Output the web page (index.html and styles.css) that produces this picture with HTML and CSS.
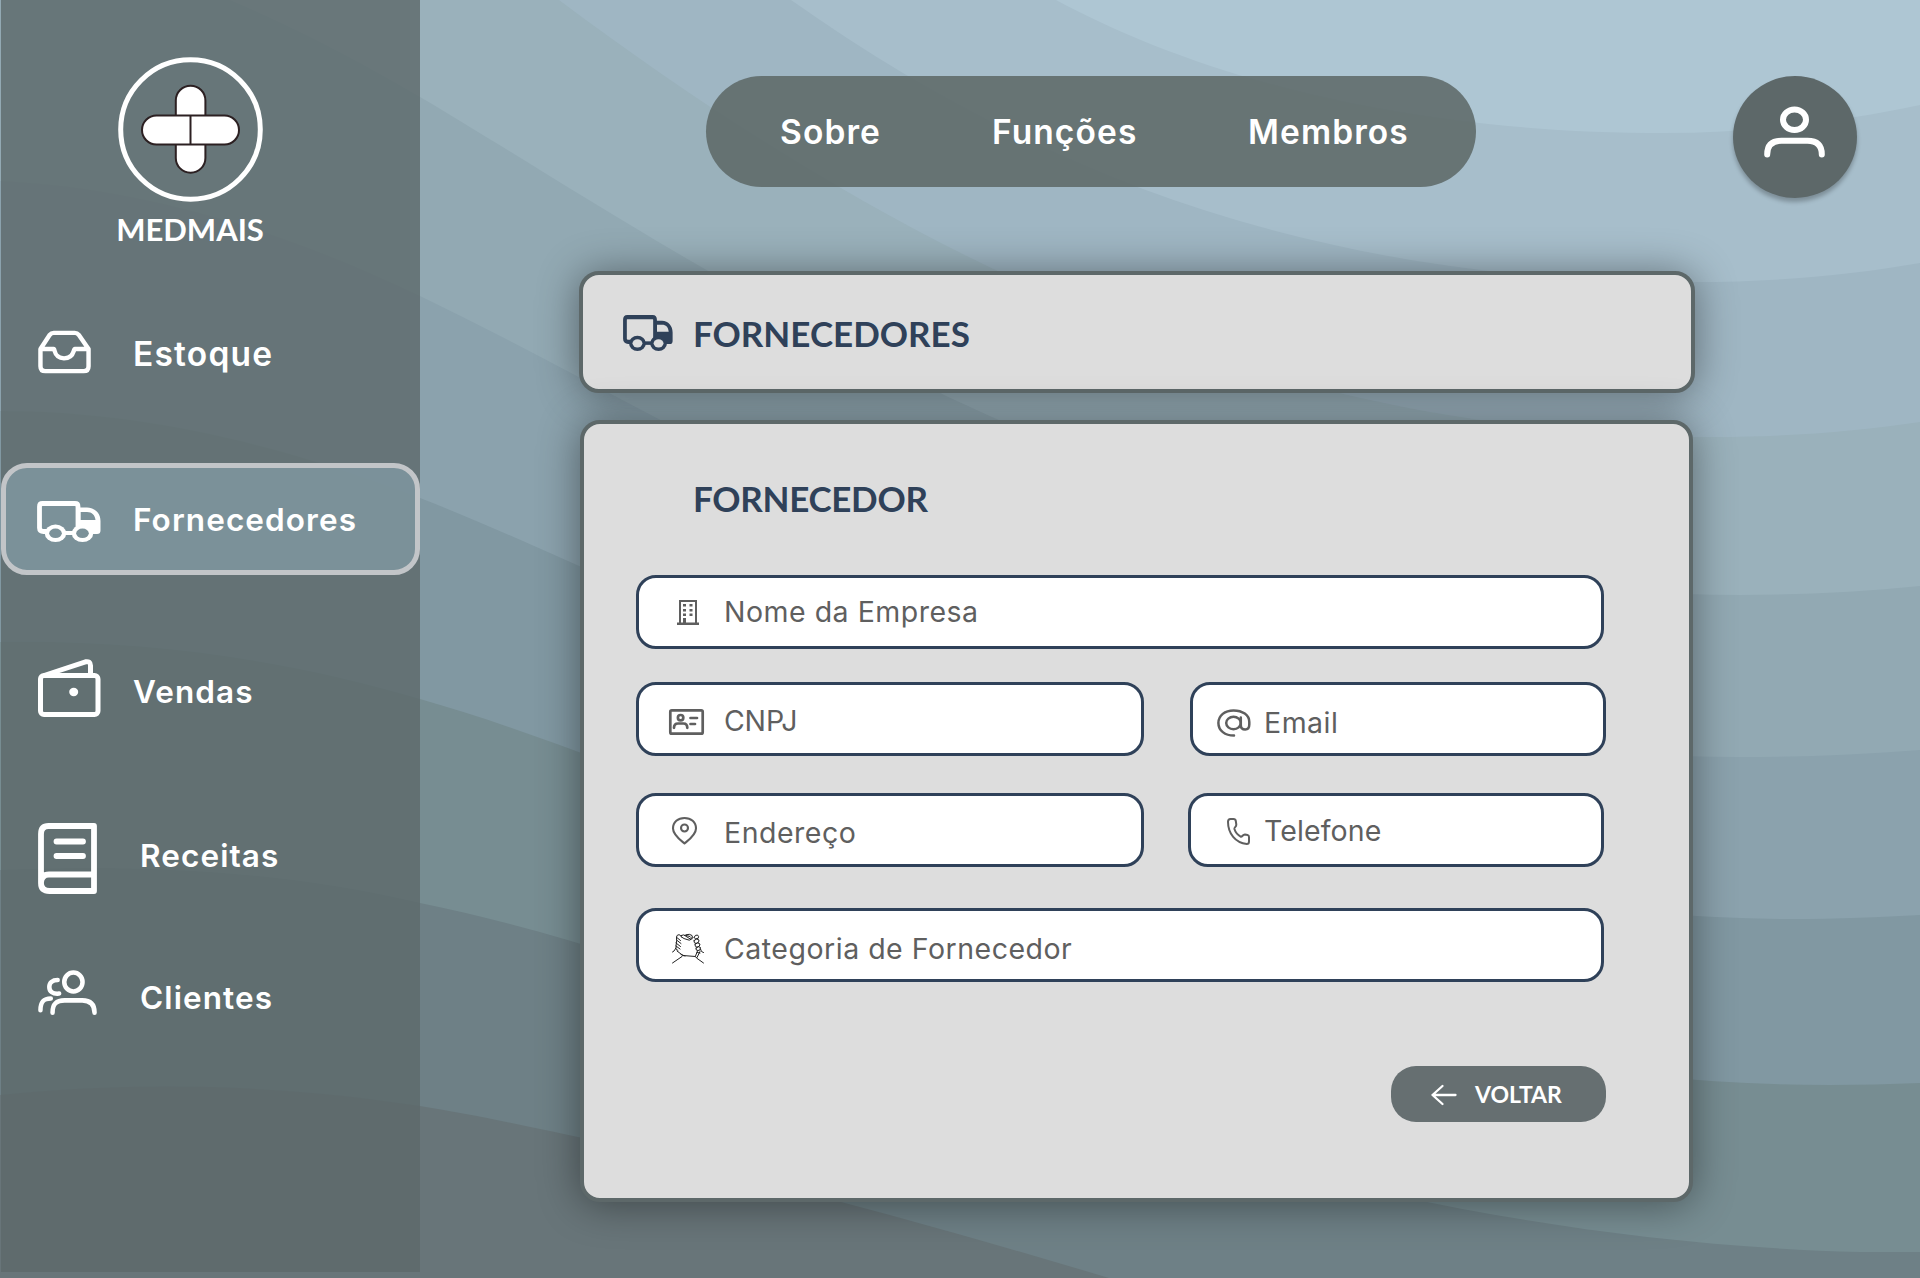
FILE: index.html
```html
<!DOCTYPE html>
<html lang="pt-BR">
<head>
<meta charset="utf-8">
<title>MedMais - Fornecedores</title>
<link rel="stylesheet" href="styles.css">
</head>
<body>
<svg class="waves" viewBox="0 0 1920 1278" preserveAspectRatio="none" aria-hidden="true">
  <rect width="1920" height="1278" fill="#aec6d3"/>
  <path fill="#a7becb" d="M1056 0C1190 72 1390 133 1665 133C1750 133 1840 122 1920 105V1278H0V0Z"/>
  <path fill="#9fb6c3" d="M791 0C1060 190 1340 282 1694 282C1780 282 1850 275 1920 263V1278H0V0Z"/>
  <path fill="#9ab1bb" d="M559 0C920 270 1280 437 1715 437C1790 437 1860 431 1920 422V1278H0V0Z"/>
  <path fill="#92a9b3" d="M230 0C300 30 360 62 420 97C640 225 1150 594 1740 595C1800 595 1860 592 1920 586V1278H0V0Z"/>
  <path fill="#8ba2ad" d="M0 181C150 188 290 234 420 296C740 450 1200 758 1740 757C1800 757 1860 755 1920 750V1278H0Z"/>
  <path fill="#8198a2" d="M0 411C150 411 290 448 420 498C720 615 1240 919 1790 919C1840 919 1880 917 1920 915V1278H0Z"/>
  <path fill="#778d92" d="M0 642C150 640 290 660 420 699C760 795 1250 1085 1830 1085C1860 1085 1890 1084 1920 1083V1278H0Z"/>
  <path fill="#6e8086" d="M0 870C150 864 290 872 420 903C800 980 1230 1235 1860 1252H1920V1278H0Z"/>
  <path fill="#687579" d="M0 1095C150 1080 290 1086 420 1106C580 1132 850 1200 1109 1278H0Z"/>
</svg>

<svg class="sprite" aria-hidden="true">
  <symbol id="truck" viewBox="0 0 64 41" preserveAspectRatio="none">
    <mask id="wheel-holes">
      <rect width="64" height="41" fill="#fff"/>
      <ellipse cx="18.500" cy="32.300" rx="6.300" ry="4.800" fill="#000"/>
      <ellipse cx="45.500" cy="32.300" rx="6.300" ry="4.800" fill="#000"/>
    </mask>
    <g mask="url(#wheel-holes)" fill="currentColor">
      <path d="M10 30.500H6.500Q2.500 30.500 2.500 27V5.500Q2.500 2.500 5.500 2.500H38Q41 2.500 41 5.500V29" fill="none" stroke="currentColor" stroke-width="4.800"/>
      <path fill-rule="evenodd" d="M41 6.500H50C58 7 63.500 12 63.500 20V29.500Q63.500 33 60 33H41ZM43.500 11V19H58.500C58 14 55 11 50 11Z"/>
      <rect x="26" y="30" width="12" height="4"/>
      <ellipse cx="18.500" cy="32.300" rx="10.800" ry="8.700"/>
      <ellipse cx="45.500" cy="32.300" rx="10.800" ry="8.700"/>
    </g>
  </symbol>
</svg>

<div class="app">
  <aside class="sidebar">
    <div class="brand">
      <svg class="brand-mark" viewBox="0 0 145 145">
        <circle cx="72.500" cy="72.500" r="69.800" fill="none" stroke="#fff" stroke-width="5"/>
        <g fill="#fff" stroke="#2c2022" stroke-width="2">
          <rect x="57.800" y="28.700" width="29.600" height="87" rx="14.800"/>
          <rect x="24" y="58.500" width="97" height="29" rx="14.500"/>
          <path d="M72.500 58.500V87.500"/>
        </g>
      </svg>
      <span class="brand-name">MEDMAIS</span>
    </div>
    <nav class="menu">
      <a class="menu-item">
        <svg class="ico-inbox" viewBox="0 0 54 44" fill="none" stroke="#fff" stroke-width="4.500" stroke-linejoin="round"><path d="M2.500 19L12 4.500Q13.500 2.500 16 2.500H37.500Q40 2.500 41.500 4.500L51.500 19V36.500Q51.500 41.500 46.500 41.500H7.500Q2.500 41.500 2.500 36.500V19H16C17.500 19 16 28 26.500 28.500C37 28.500 36 19 37.500 19H51"/></svg>
        <span class="t-estoque">Estoque</span>
      </a>
      <a class="menu-item active">
        <svg class="ico-truck"><use href="#truck"/></svg>
        <span class="t-fornecedores">Fornecedores</span>
      </a>
      <a class="menu-item sales">
        <svg class="ico-wallet" viewBox="0 0 63 58" fill="none" stroke="#fff" stroke-width="5" stroke-linejoin="round"><rect x="2.500" y="16.500" width="57.500" height="39" rx="3.500"/><path d="M6 16.500L47.500 2.800Q52.500 2 52.500 6.500V16"/><ellipse cx="35.700" cy="33" rx="4.500" ry="4.200" fill="#fff" stroke="none"/></svg>
        <span class="t-vendas">Vendas</span>
      </a>
      <a class="menu-item recipes">
        <svg class="ico-book" viewBox="0 0 59 71" fill="none" stroke="#fff" stroke-width="5.800" stroke-linejoin="round" stroke-linecap="round"><path d="M3 60V11Q3 3 10.500 3H56V68H11.500Q3 68 3 60Q3 51.500 11 51.500H56M18.500 18.500H45M18.500 33H45"/></svg>
        <span class="t-receitas">Receitas</span>
      </a>
      <a class="menu-item clients">
        <svg class="ico-users" viewBox="0 0 60 46" fill="none" stroke="#fff" stroke-width="4.600" stroke-linecap="round"><ellipse cx="36" cy="11.800" rx="9.300" ry="9.600"/><path d="M14.800 43C14.800 34 19 30.500 27 30.500H45C53 30.500 57.500 34 57.500 43M20 9.800C14.500 9.800 11.500 12.500 11.500 16.800C11.500 21.500 15 24.300 21.500 23.600M2.500 40.500C2.500 32 5.500 28.500 13 28.500"/></svg>
        <span class="t-clientes">Clientes</span>
      </a>
    </nav>
  </aside>

  <main class="content">
    <header class="topbar">
      <nav class="pill">
        <a class="t-sobre">Sobre</a>
        <a class="t-funcoes">Funções</a>
        <a class="t-membros">Membros</a>
      </nav>
      <a class="avatar">
        <svg viewBox="0 0 61 52" fill="none" stroke="#fff" stroke-width="6" stroke-linecap="round"><ellipse cx="30.500" cy="13.800" rx="11.500" ry="10.300"/><path d="M3.200 48.500C3.200 38.500 9 34.800 17.500 34.800H43.500C52 34.800 57.800 38.500 57.800 48.500"/></svg>
      </a>
    </header>

    <section class="card heading">
      <svg class="ico-title"><use href="#truck"/></svg>
      <h1>FORNECEDORES</h1>
    </section>

    <section class="card panel">
      <h2>FORNECEDOR</h2>
      <div class="field wide company">
        <svg class="ico-building" viewBox="0 0 22 25" fill="#5f5f5f"><path fill-rule="evenodd" d="M2 0H20V22.500H22V25H0V22.500H2ZM4 2V22.500H6V18H9V22.500H18V2Z"/><path d="M6 4H9V6.500H6ZM12.500 4H15.500V6.500H12.500ZM6 9H9V11.500H6ZM12.500 9H15.500V11.500H12.500ZM6 13.500H9V16H6ZM12.500 13.500H15.500V16H12.500Z"/></svg>
        <span class="t-nome">Nome da Empresa</span>
      </div>
      <div class="row">
        <div class="field mid cnpj">
          <svg class="ico-id" viewBox="0 0 35 26" fill="none" stroke="#5f5f5f" stroke-width="2.700" stroke-linecap="round"><rect x="1.300" y="1.300" width="32.400" height="23.400" rx="1.500"/><circle cx="11.600" cy="8.700" r="2.700"/><path d="M5 18.800C5 15.500 7 14.500 9 14.500H14.500C17 14.500 18.300 16 18.300 18.800M21.500 9H28M21.500 15H26"/></svg>
          <span class="t-cnpj">CNPJ</span>
        </div>
        <div class="field small email">
          <svg class="ico-at" viewBox="0 0 34 28" fill="none" stroke="#5f5f5f" stroke-width="2.500" stroke-linecap="round"><path d="M17 26.600C8 26.600 1.400 21.500 1.400 14C1.400 6.500 8 1.400 16.500 1.400C25.500 1.400 32.300 6 32.300 13V15.500C32.300 19 30.800 20.500 28.200 20.500C25.500 20.500 23.800 19 23.800 16V8.500"/><ellipse cx="16.500" cy="14" rx="7.300" ry="6.200"/></svg>
          <span class="t-email">Email</span>
        </div>
      </div>
      <div class="row second">
        <div class="field mid address">
          <svg class="ico-pin" viewBox="0 0 25 28" fill="none" stroke="#5f5f5f" stroke-width="2.100" stroke-linejoin="round"><path d="M12.500 26.500C9 23.500 1 18 1 11.500C1 5 6 1 12.500 1C19 1 24 5 24 11.500C24 18 16 23.500 12.500 26.500Z"/><circle cx="12.500" cy="11" r="3.500"/></svg>
          <span class="t-endereco">Endereço</span>
        </div>
        <div class="field small phone">
          <svg class="ico-phone" viewBox="0 0 23 27" fill="none" stroke="#5f5f5f" stroke-width="2" stroke-linejoin="round"><path d="M3.500 1H6.500Q8.500 1 8.800 3L9.300 6.500C9.500 9 7 9.300 7.400 11C8.500 14.500 11.500 17.500 14 18.800C15.500 18.800 15.800 16.300 18 16.500L20.500 17Q22 17.300 22 19V23.500Q22 26 19.800 26C8.500 25 1 15.500 1 3.800Q1 1 3.500 1Z"/></svg>
          <span class="t-telefone">Telefone</span>
        </div>
      </div>
      <div class="field wide category">
        <svg class="ico-hands" viewBox="0 0 32 30" fill="none" stroke="#222" stroke-width="1" stroke-linecap="round" stroke-linejoin="round"><path d="M0.500 29L10 22.500L11 21.500L23.500 22.500L24.500 24L31.500 29M0.500 18L2 17L4 14M9 20.500L13 22M11 21.500L5 17M4 14L4 12Q5 6 4.500 3Q4.800 0.700 7 0.700Q9 1 9.500 3M4.800 3.500L8.500 6.500M4.500 6L9 9.500M4 9L8.500 12.500M4 12L8 15M3.500 14.500L6 16.500M9 1.500Q12 0 13.500 2L19 5.500Q20 3.500 18 2.500L13 1.200M9.500 3Q12 5 15 5.500Q17.500 7 19 5.500M14 0.700Q18 -0.500 20 1.500Q21 3 20 5M22 3.500Q23 0.500 25.500 1Q27.500 2.500 26 4.500Q23 6 22 3.500M22 6.500Q25 3.500 27 6Q27.500 9 24 9.500Q21.500 9 22 6.500M23 10Q26 7.500 28 10Q28 13 25 13.200Q22.500 13 23 10M24 14Q26.500 11.500 28.500 13.500Q28.500 17 26 16.500Q23.500 17 24 14M28.500 15L29.500 17.500L31.500 18.500M28 17.500L25 23.500M25.500 17L23.500 22M25 18.500L28 19"/></svg>
        <span class="t-categoria">Categoria de Fornecedor</span>
      </div>
      <a class="back">
        <svg viewBox="0 0 26 22" fill="none" stroke="#fff" stroke-width="2.300" stroke-linecap="round" stroke-linejoin="round"><path d="M24.500 11H1.500M11.500 2L1.500 11L11.500 20"/></svg>
        <span class="t-voltar">VOLTAR</span>
      </a>
    </section>
  </main>
</div>
</body>
</html>
```
FILE: styles.css
```css
* { box-sizing: border-box; }

body {
  margin: 0;
  width: 1920px;
  height: 1278px;
  overflow: hidden;
  font-family: "Inter", "Open Sans", sans-serif;
  background: #687579;
}

.waves {
  position: absolute;
  inset: 0;
  width: 1920px;
  height: 1278px;
}

.sprite { position: absolute; width: 0; height: 0; }

svg { display: block; flex: none; overflow: visible; }

.app {
  position: relative;
  display: flex;
  height: 1278px;
}

/* Sidebar */
.sidebar {
  margin-left: 1px;
  width: 419px;
  height: 1272px;
  background: rgba(93, 105, 106, 0.8);
  color: #fff;
}

.brand {
  display: flex;
  flex-direction: column;
  align-items: center;
  width: 378px;
  padding-top: 57px;
  height: 298px;
}

.brand-mark { width: 145px; height: 145px; }

.brand-name {
  margin-top: 8px;
  font-family: "Lato", sans-serif;
  font-size: 31px;
  line-height: 38px;
  font-weight: 700;
}

.menu { display: flex; flex-direction: column; }

.menu-item {
  display: flex;
  align-items: center;
  height: 112px;
  padding-left: 37px;
  font-size: 31.5px;
  font-weight: 600;
  letter-spacing: 1.1px;
  white-space: nowrap;
}

.menu-item.active {
  margin-top: 53px;
  padding-left: 31px;
  border: 5px solid #c2c5c8;
  border-radius: 26px;
  background: rgba(129, 152, 162, 0.8);
}

.sales { margin-top: 60px; }
.recipes { margin-top: 52px; }
.clients { margin-top: 30px; }

.ico-inbox { width: 53px; height: 44px; margin: 0 42px 4px 0; }
.ico-truck { width: 64px; height: 41px; margin: 5px 32px 0 0; }
.ico-wallet { width: 63px; height: 58px; margin: 0 32px 6px 0; }
.ico-book { width: 59px; height: 71px; margin: 7px 43px 0 0; }
.ico-users { width: 59px; height: 46px; margin: 0 43px 8px 0; }

.t-estoque { font-size: 33.5px; letter-spacing: 1.2px; }

/* Top bar */
.content { flex: 1; }

.topbar {
  display: flex;
  padding: 76px 63px 0 286px;
  height: 271px;
  justify-content: space-between;
  align-items: flex-start;
}

.pill {
  display: flex;
  align-items: center;
  width: 770px;
  height: 111px;
  padding: 0 0 0 74px;
  border-radius: 56px;
  background: rgba(93, 104, 103, 0.87);
  color: #fff;
  font-size: 33.5px;
  font-weight: 600;
  letter-spacing: 1.1px;
}

.pill a { white-space: nowrap; }
.t-sobre { width: 212px; }
.t-funcoes { width: 256px; }

.avatar {
  display: flex;
  justify-content: center;
  width: 124px;
  height: 122px;
  padding: 30px 2px 0 0;
  border-radius: 50%;
  background: #5d6869;
  box-shadow: 0 4px 4px rgba(0, 0, 0, 0.25);
}

.avatar svg { width: 61px; height: 52px; }

/* Cards */
.card {
  border: 4px solid #5d6869;
  border-radius: 20px;
  background: #ddd;
  box-shadow: 0 2px 42px rgba(0, 0, 0, 0.42);
  color: #2f4159;
}

h1, h2 {
  margin: 0;
  font-family: "Lato", sans-serif;
  font-size: 35px;
  line-height: 42px;
  font-weight: 700;
}

.heading {
  display: flex;
  align-items: center;
  width: 1116px;
  height: 122px;
  margin-left: 159px;
  padding-left: 40px;
}

.heading h1 { padding-top: 2px; }

.ico-title { width: 50px; height: 36px; margin: 2px 20px 0 0; }

.panel {
  width: 1113px;
  height: 782px;
  margin: 27px 0 0 160px;
  padding: 53px 0 0 52px;
}

.panel h2 { margin: 0 0 56px 57px; letter-spacing: -0.3px; }

.field {
  display: flex;
  align-items: center;
  height: 74px;
  border: 3px solid #2f4159;
  border-radius: 20px;
  background: #fff;
  color: #5f5f5f;
  font-size: 28.5px;
  letter-spacing: 0.5px;
  white-space: nowrap;
}

.wide { width: 968px; }
.mid { width: 508px; }
.small { width: 416px; }

.row { display: flex; gap: 46px; margin-top: 33px; }
.row.second { gap: 44px; margin-top: 37px; }
.category { margin-top: 41px; }

.company { padding-left: 38px; }
.cnpj { padding-left: 30px; }
.email { padding-left: 24px; }
.address { padding-left: 33px; }
.phone { padding-left: 36px; }
.category { padding-left: 33px; }

.t-nome { padding-bottom: 1px; }
.t-cnpj { padding-top: 3px; letter-spacing: -0.2px; }
.t-email { padding-top: 7px; }
.t-endereco { padding-top: 5px; }
.t-telefone { padding-top: 1px; letter-spacing: 0.1px; }
.t-categoria { padding-top: 7px; }

.ico-building { width: 22px; height: 25px; margin-right: 25px; }
.ico-id { width: 35px; height: 26px; margin: 6px 20px 0 0; }
.ico-at { width: 34px; height: 28px; margin: 8px 13px 0 0; }
.ico-pin { width: 25px; height: 28px; margin: 2px 27px 0 0; }
.ico-phone { width: 23px; height: 27px; margin: 3px 14px 0 0; }
.ico-hands { width: 32px; height: 30px; margin: 8px 20px 0 0; }

.back {
  display: flex;
  align-items: center;
  width: 215px;
  height: 56px;
  margin: 84px 0 0 755px;
  padding-left: 40px;
  border-radius: 25px;
  background: #666f71;
  color: #fff;
  font-family: "Lato", sans-serif;
  font-size: 23px;
  font-weight: 700;
}

.back svg { width: 26px; height: 22px; margin: 2px 18px 0 0; }
```
